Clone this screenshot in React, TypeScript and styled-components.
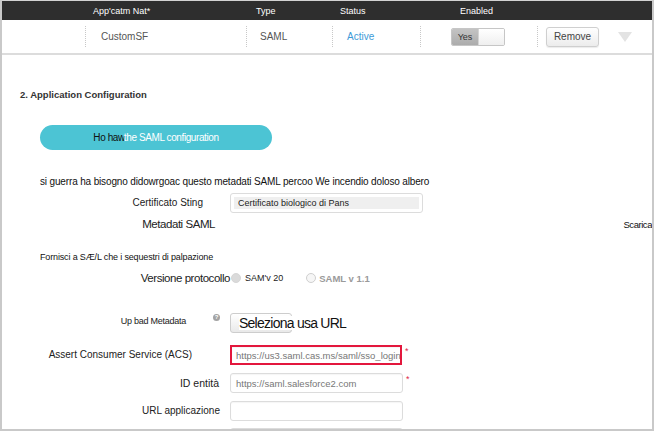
import React from "react";
import styled, { createGlobalStyle } from "styled-components";

const Global = createGlobalStyle`
  html, body { margin: 0; padding: 0; background: #fff; }
  body { font-family: "Liberation Sans", Arial, sans-serif; }
`;

const Frame = styled.div`
  width: 654px;
  height: 431px;
  box-sizing: border-box;
  border: 2px solid #c9c9c9;
  border-top: 1px solid #d2d2d2;
  overflow: hidden;
  background: #fff;
  color: #222;
`;

const TableGrid = styled.div<{ $dark?: boolean; $h: number }>`
  display: grid;
  grid-template-columns: 83px 161px 86px 88px 117px 1fr;
  align-items: center;
  height: ${(p) => p.$h}px;
  background: ${(p) => (p.$dark ? "#2e2e2e" : "#fff")};
  border-bottom: ${(p) => (p.$dark ? "none" : "2px solid #dcdcdc")};
`;

const HeadCell = styled.div<{ $pad: number }>`
  padding-left: ${(p) => p.$pad}px;
  color: #fff;
  font-size: 9px;
  white-space: nowrap;
`;

const Cell = styled.div<{ $pad: number; $sep?: boolean; $color?: string }>`
  display: flex;
  align-items: center;
  height: 21px;
  padding-left: ${(p) => p.$pad}px;
  border-left: ${(p) => (p.$sep ? "1px dotted #c8c8c8" : "none")};
  font-size: 10px;
  color: ${(p) => p.$color || "#555"};
  white-space: nowrap;
`;

const Toggle = styled.div`
  display: flex;
  width: 54px;
  height: 18px;
  box-sizing: border-box;
  border: 1px solid #c6c6c6;
  border-radius: 2px;
  overflow: hidden;
`;

const ToggleOn = styled.span`
  width: 26px;
  display: flex;
  align-items: center;
  justify-content: center;
  background: linear-gradient(#c4c4c4, #acacac);
  color: #333;
  font-size: 9px;
`;

const ToggleOff = styled.span`
  flex: 1;
  background: linear-gradient(#ffffff, #efefef);
  border-left: 1px solid #d4d4d4;
`;

const RemoveButton = styled.button`
  width: 53px;
  height: 20px;
  padding: 0;
  box-sizing: border-box;
  border: 1px solid #cfcfcf;
  border-radius: 3px;
  background: linear-gradient(#ffffff, #ececec);
  box-shadow: 0 1px 1px rgba(0, 0, 0, 0.08);
  font-family: "Liberation Sans", Arial, sans-serif;
  font-size: 10px;
  color: #444;
`;

const Caret = styled.span`
  width: 0;
  height: 0;
  margin-left: 19px;
  border-left: 7px solid transparent;
  border-right: 7px solid transparent;
  border-top: 10px solid #e3e3e3;
`;

const Heading = styled.div`
  margin: 34px 0 0 18px;
  font-size: 9.5px;
  font-weight: bold;
  line-height: 12px;
  color: #333;
`;

const TealButton = styled.div`
  margin: 24px 0 0 38px;
  width: 232px;
  height: 25px;
  border-radius: 13px;
  background: #4cc4d4;
  display: flex;
  align-items: center;
  justify-content: center;
  font-size: 10px;
  letter-spacing: -0.4px;
  color: #fff;
  white-space: nowrap;
`;

const DarkText = styled.span`
  color: #111;
  margin-right: -1px;
`;

const Note = styled.div<{ $mt: number; $size: number }>`
  margin-top: ${(p) => p.$mt}px;
  padding-left: 38px;
  font-size: ${(p) => p.$size}px;
  line-height: 12px;
  letter-spacing: -0.15px;
  color: #111;
  white-space: nowrap;
`;

const FieldRow = styled.div<{ $mt: number; $align?: string }>`
  display: grid;
  grid-template-columns: 228px 1fr;
  align-items: ${(p) => p.$align || "center"};
  margin-top: ${(p) => p.$mt}px;
`;

const FieldLabel = styled.div<{ $pr: number; $size?: number; $track?: number }>`
  display: flex;
  align-items: center;
  justify-content: flex-end;
  padding-right: ${(p) => p.$pr}px;
  font-size: ${(p) => p.$size || 10}px;
  letter-spacing: ${(p) => p.$track ?? 0}px;
  line-height: 16px;
  color: #222;
  white-space: nowrap;
`;

const Field = styled.div`
  display: flex;
  align-items: flex-start;
`;

const TextBox = styled.div<{ $w: number; $alert?: boolean }>`
  width: ${(p) => p.$w}px;
  height: 20px;
  box-sizing: border-box;
  border: ${(p) => (p.$alert ? "2px solid #e3173d" : "1px solid #dcdcdc")};
  border-radius: ${(p) => (p.$alert ? 0 : 3)}px;
  padding: 0 ${(p) => (p.$alert ? 4 : 5)}px;
  display: flex;
  align-items: center;
  overflow: hidden;
  white-space: nowrap;
  font-size: 9.5px;
  color: #777;
  box-shadow: inset 0 1px 1px rgba(0, 0, 0, 0.04);
`;

const CertBox = styled.div`
  width: 193px;
  height: 20px;
  box-sizing: border-box;
  border: 1px solid #dcdcdc;
  border-radius: 3px;
  padding: 3px 3px;
`;

const CertInner = styled.div`
  height: 12px;
  background: #efefef;
  padding-left: 4px;
  font-size: 9px;
  line-height: 12px;
  color: #222;
  white-space: nowrap;
`;

const Required = styled.span`
  margin: 2px 0 0 3px;
  color: #e0284a;
  font-size: 9px;
  line-height: 9px;
`;

const Download = styled.div`
  justify-self: end;
  font-size: 9.5px;
  letter-spacing: -0.45px;
  color: #111;
`;

const Options = styled.div`
  display: flex;
  align-items: center;
`;

const Radio = styled.span<{ $checked?: boolean }>`
  width: 8px;
  height: 8px;
  border-radius: 50%;
  border: 1px solid ${(p) => (p.$checked ? "#d6d6d6" : "#cfcfcf")};
  background: ${(p) => (p.$checked ? "#dadada" : "#f6f6f6")};
  margin-left: ${(p) => (p.$checked ? 1 : 23)}px;
`;

const OptionText = styled.span<{ $muted?: boolean }>`
  margin-left: ${(p) => (p.$muted ? 3 : 4)}px;
  font-size: ${(p) => (p.$muted ? 9.5 : 9)}px;
  font-weight: ${(p) => (p.$muted ? "bold" : "normal")};
  color: ${(p) => (p.$muted ? "#9a9a9a" : "#222")};
`;

const HelpIcon = styled.span`
  width: 7px;
  height: 7px;
  margin-left: 27px;
  border-radius: 50%;
  background: #a3a3a3;
  color: #fff;
  font-size: 6px;
  line-height: 7px;
  text-align: center;
  font-weight: bold;
  align-self: flex-start;
  margin-top: 1px;
`;

const PickButton = styled.div`
  width: 62px;
  height: 20px;
  box-sizing: border-box;
  border: 1px solid #cdcdcd;
  border-radius: 3px;
  background: linear-gradient(#ffffff, #e9e9e9);
  display: flex;
  align-items: center;
`;

const PickText = styled.span`
  margin-left: 8px;
  padding-right: 1px;
  background: #fff;
  font-size: 14px;
  line-height: 14px;
  letter-spacing: -0.75px;
  color: #111;
  white-space: nowrap;
`;

export default function App() {
  return (
    <>
      <Global />
      <Frame>
        <TableGrid $dark $h={19}>
          <div />
          <HeadCell $pad={8}>App'catm Nat*</HeadCell>
          <HeadCell $pad={10}>Type</HeadCell>
          <HeadCell $pad={8}>Status</HeadCell>
          <HeadCell $pad={40}>Enabled</HeadCell>
          <div />
        </TableGrid>
        <TableGrid $h={33}>
          <div />
          <Cell $sep $pad={15}>CustomSF</Cell>
          <Cell $sep $pad={13}>SAML</Cell>
          <Cell $sep $pad={14} $color="#3d9ad8">Active</Cell>
          <Cell $sep $pad={30}>
            <Toggle>
              <ToggleOn>Yes</ToggleOn>
              <ToggleOff />
            </Toggle>
          </Cell>
          <Cell $sep $pad={8}>
            <RemoveButton>Remove</RemoveButton>
            <Caret />
          </Cell>
        </TableGrid>

        <Heading>2. Application Configuration</Heading>
        <TealButton>
          <DarkText>Ho haw</DarkText>the SAML configuration
        </TealButton>
        <Note $mt={26} $size={10}>si guerra ha bisogno didowrgoac questo metadati SAML percoo We incendio doloso albero</Note>

        <FieldRow $mt={5}>
          <FieldLabel $pr={27}>Certificato Sting</FieldLabel>
          <Field>
            <CertBox>
              <CertInner>Certificato biologico di Pans</CertInner>
            </CertBox>
          </Field>
        </FieldRow>

        <FieldRow $mt={3}>
          <FieldLabel $pr={15} $size={11.5} $track={-0.45}>Metadati SAML</FieldLabel>
          <Download>Scarica</Download>
        </FieldRow>

        <Note $mt={19} $size={9}>Fornisci a SÆ/L che i sequestri di palpazione</Note>

        <FieldRow $mt={7}>
          <FieldLabel $pr={0} $size={11.5} $track={-0.45}>Versione protocollo</FieldLabel>
          <Options>
            <Radio $checked />
            <OptionText>SAM'v 20</OptionText>
            <Radio />
            <OptionText $muted>SAML v 1.1</OptionText>
          </Options>
        </FieldRow>

        <FieldRow $mt={27} $align="start">
          <FieldLabel $pr={10} $size={9} $track={-0.25}>
            Up bad Metadata
            <HelpIcon>?</HelpIcon>
          </FieldLabel>
          <Field>
            <PickButton>
              <PickText>Seleziona usa URL</PickText>
            </PickButton>
          </Field>
        </FieldRow>

        <FieldRow $mt={12}>
          <FieldLabel $pr={38}>Assert Consumer Service (ACS)</FieldLabel>
          <Field>
            <TextBox $w={172} $alert>https://us3.saml.cas.ms/saml/sso_login</TextBox>
            <Required>*</Required>
          </Field>
        </FieldRow>

        <FieldRow $mt={8}>
          <FieldLabel $pr={11} $size={10.5}>ID entità</FieldLabel>
          <Field>
            <TextBox $w={173}>https://saml.salesforce2.com</TextBox>
            <Required>*</Required>
          </Field>
        </FieldRow>

        <FieldRow $mt={8}>
          <FieldLabel $pr={10}>URL applicazione</FieldLabel>
          <Field>
            <TextBox $w={173} />
          </Field>
        </FieldRow>

        <FieldRow $mt={7}>
          <div />
          <Field>
            <TextBox $w={173} />
          </Field>
        </FieldRow>
      </Frame>
    </>
  );
}
